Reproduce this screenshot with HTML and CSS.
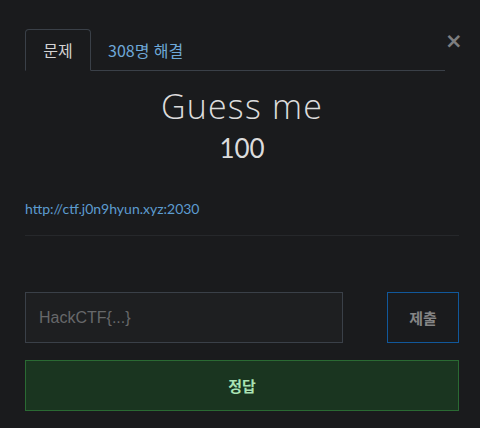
FILE: index.html
```html
<!DOCTYPE html>
<html lang="ko">
<head>
<meta charset="utf-8">
<link rel="stylesheet" href="styles.css">
</head>
<body>
<div class="modal">
  <div class="header">
    <nav class="tabs">
      <span class="tab active">문제</span>
      <span class="tab solves">308명 해결</span>
    </nav>
    <span class="close">&times;</span>
  </div>
  <h1 class="title">Guess me</h1>
  <div class="value">100</div>
  <a class="link" href="#">http://ctf.j0n9hyun.xyz:2030</a>
  <hr class="divider">
  <div class="submit-row">
    <input class="answer" type="text" placeholder="HackCTF{...}">
    <button class="submit">제출</button>
  </div>
  <div class="result">정답</div>
</div>
</body>
</html>
```
FILE: styles.css
```css
html, body {
  margin: 0;
  padding: 0;
  background: #1a1b1d;
  width: 480px;
  height: 428px;
  overflow: hidden;
}
.modal {
  padding: 29px 21px 0 25px;
  font-family: "Noto Sans CJK KR", "Noto Sans", sans-serif;
}
.header {
  display: flex;
  align-items: flex-start;
}
.tabs {
  flex: 1;
  display: flex;
  border-bottom: 1px solid #3a4048;
  height: 41px;
}
.tab {
  display: flex;
  align-items: center;
  height: 41px;
  box-sizing: border-box;
  font-size: 16px;
}
.tab.active {
  width: 66px;
  justify-content: center;
  border: 1px solid #3a4048;
  border-bottom: 1px solid #1a1b1d;
  border-radius: 4px 4px 0 0;
  color: #d2d2d2;
  height: 42px;
}
.tab.solves {
  padding-left: 17px;
  color: #6ea8d8;
}
.close {
  width: 14px;
  text-align: right;
  font-family: "DejaVu Sans", sans-serif;
  font-weight: bold;
  font-size: 21px;
  line-height: 22px;
  margin-top: 1px;
  color: #7d7e80;
}
.title {
  margin: 15px 0 0;
  text-align: center;
  font-family: "Open Sans", sans-serif;
  font-weight: 300;
  font-size: 34px;
  letter-spacing: 1.2px;
  line-height: 40px;
  color: #dcdcdc;
}
.value {
  text-align: center;
  font-family: Lato, sans-serif;
  font-size: 26px;
  line-height: 32px;
  color: #dcdcdc;
  margin-top: 6px;
}
.link {
  display: block;
  margin-top: 36px;
  font-family: Lato, sans-serif;
  font-size: 14px;
  line-height: 17px;
  color: #5d9cd0;
  text-decoration: none;
}
.divider {
  margin: 18px 0 0;
  border: 0;
  border-top: 1px solid #26282b;
}
.submit-row {
  display: flex;
  justify-content: space-between;
  margin-top: 56px;
}
.answer {
  width: 318px;
  height: 51px;
  box-sizing: border-box;
  background: #1e1f21;
  border: 1px solid #3a4048;
  padding: 0 13px;
  font-family: "Liberation Sans", sans-serif;
  font-size: 16px;
  color: #ccc;
  outline: none;
}
.answer::placeholder {
  color: #67686a;
}
.submit {
  appearance: none;
  width: 72px;
  height: 51px;
  box-sizing: border-box;
  background: #1a1b1d;
  border-width: 1px;
  border-style: solid;
  border-color: #11589b;
  font-family: "Noto Sans CJK KR", sans-serif;
  font-weight: bold;
  font-size: 15px;
  color: #858585;
}
.result {
  margin-top: 17px;
  height: 51px;
  box-sizing: border-box;
  background: #1a3520;
  border: 1px solid #2a6a33;
  display: flex;
  align-items: center;
  justify-content: center;
  font-weight: bold;
  font-size: 15px;
  color: #a9e2b3;
}
```
